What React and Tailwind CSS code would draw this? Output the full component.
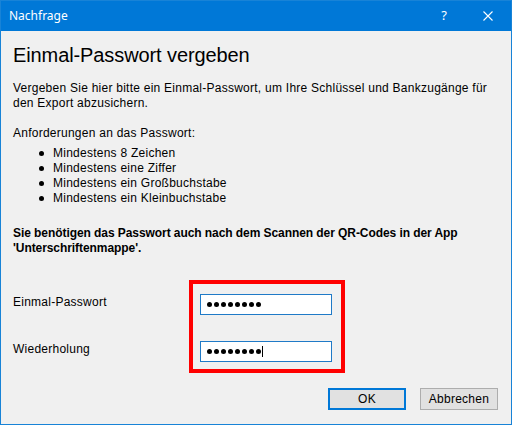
import React from "react";

function Dots({ caret }) {
  return (
    <div className="flex items-center h-full pl-[6px] gap-[2px]">
      {Array.from({ length: 8 }).map((_, i) => (
        <div key={i} className="w-[5px] h-[5px] rounded-full bg-black" />
      ))}
      {caret && <div className="w-px h-[11px] bg-black ml-[-1px]" />}
    </div>
  );
}

export default function App() {
  const items = [
    "Mindestens 8 Zeichen",
    "Mindestens eine Ziffer",
    "Mindestens ein Großbuchstabe",
    "Mindestens ein Kleinbuchstabe",
  ];
  return (
    <div
      className="w-[512px] h-[425px] border border-[#1883d7] bg-[#f0f0f0] flex flex-col text-black"
      style={{ fontFamily: '"Liberation Sans", Arial, sans-serif' }}
    >
      <div className="h-[30px] bg-[#0078d7] flex items-center text-white shrink-0">
        <span
          className="pl-[8px] text-[12px]"
          style={{ fontFamily: '"Noto Sans", "Liberation Sans", sans-serif' }}
        >
          Nachfrage
        </span>
        <span
          className="ml-auto text-[13px] mr-[36px]"
          style={{ fontFamily: '"Noto Sans", "Liberation Sans", sans-serif' }}
        >
          ?
        </span>
        <svg width="10" height="10" viewBox="0 0 10 10" className="mr-[18px]">
          <path d="M0.5 0.5 L9.5 9.5 M9.5 0.5 L0.5 9.5" stroke="white" strokeWidth="1.1" fill="none" />
        </svg>
      </div>

      <div className="flex flex-col pl-[12px] pr-[13px]">
        <div className="mt-[12px] text-[20px] leading-[24px] tracking-[-0.1px]">Einmal-Passwort vergeben</div>
        <div className="mt-[14px] text-[12px] leading-[15px] tracking-[0.25px] whitespace-nowrap">
          Vergeben Sie hier bitte ein Einmal-Passwort, um Ihre Schlüssel und Bankzugänge für
          <br />
          den Export abzusichern.
        </div>
        <div className="mt-[15px] text-[12px] leading-[15px] tracking-[0.25px]">Anforderungen an das Passwort:</div>
        <ul className="mt-[5px] text-[12px] leading-[15px] tracking-[0.25px]">
          {items.map((t) => (
            <li key={t} className="flex items-center">
              <span className="w-[5px] h-[5px] rounded-full bg-black ml-[26px] mr-[9px]" />
              <span>{t}</span>
            </li>
          ))}
        </ul>
        <div className="mt-[20px] text-[12px] leading-[15px] font-bold tracking-[-0.07px]">
          Sie benötigen das Passwort auch nach dem Scannen der QR-Codes in der App
          <br />
          'Unterschriftenmappe'.
        </div>

        <div className="mt-[24px] flex">
          <div className="w-[176px] flex flex-col text-[12px] leading-[15px] tracking-[0.25px]">
            <div className="mt-[15px]">Einmal-Passwort</div>
            <div className="mt-[32px]">Wiederholung</div>
          </div>
          <div className="w-[156px] h-[93px] border-[4px] border-[#ff0000] pl-[7px] pt-[10px]">
            <div className="w-[132px] h-[21px] border border-[#1f7ac7] bg-white">
              <Dots />
            </div>
            <div className="mt-[26px] w-[132px] h-[21px] border border-[#1f7ac7] bg-white">
              <Dots caret />
            </div>
          </div>
        </div>

        <div className="mt-[15px] flex justify-end gap-[14px] text-[12px] tracking-[0.25px]">
          <button className="w-[78px] h-[22px] border-2 border-[#0078d7] bg-[#e1e1e1] flex items-center justify-center">
            OK
          </button>
          <button className="w-[78px] h-[22px] border border-[#adadad] bg-[#e1e1e1] flex items-center justify-center">
            Abbrechen
          </button>
        </div>
      </div>
    </div>
  );
}
